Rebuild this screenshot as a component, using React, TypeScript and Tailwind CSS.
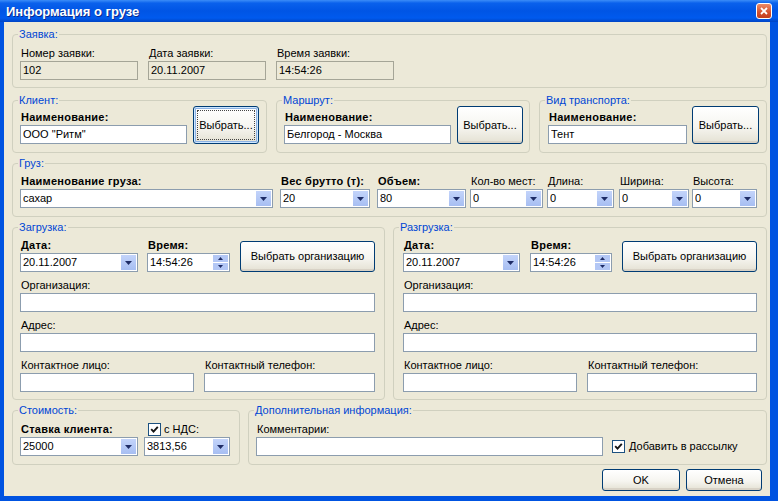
import type { ReactNode } from 'react'

function Group({
  title,
  className = '',
  children
}: {
  title: string
  className?: string
  children: ReactNode
}) {
  return (
    <div className={`relative shrink-0 rounded-[4px] border border-[#D0D0BF] ${className}`}>
      <span className="absolute -top-[7px] left-[5px] bg-[#ECE9D8] px-[1px] leading-[13px] text-[#0046D5]">
        {title}
      </span>
      {children}
    </div>
  )
}

function Label({ children, bold = false }: { children: ReactNode; bold?: boolean }) {
  return (
    <div
      className={`h-[14px] whitespace-nowrap pl-[1px] leading-[14px] ${
        bold ? 'font-bold tracking-[0.25px]' : ''
      }`}
    >
      {children}
    </div>
  )
}

function ArrowDown() {
  return (
    <svg width="7" height="4" viewBox="0 0 7 4">
      <path d="M0 0h7L3.5 4z" fill="#1E2C66" />
    </svg>
  )
}

function ArrowUp() {
  return (
    <svg width="5" height="3" viewBox="0 0 5 3">
      <path d="M0 3h5L2.5 0z" fill="#1E2C66" />
    </svg>
  )
}

function DropBtn() {
  return (
    <span className="mr-[1px] flex h-[15px] w-[15px] shrink-0 items-center justify-center bg-[linear-gradient(180deg,#C3D4FA_0%,#A7BEF2_100%)]">
      <ArrowDown />
    </span>
  )
}

function Spin() {
  return (
    <span className="mr-[1px] flex shrink-0 flex-col gap-[1px]">
      <span className="flex h-[7px] w-[15px] items-center justify-center bg-[#B3C7F5]">
        <ArrowUp />
      </span>
      <span className="flex h-[7px] w-[15px] items-center justify-center bg-[#B3C7F5]">
        <svg width="5" height="3" viewBox="0 0 5 3">
          <path d="M0 0h5L2.5 3z" fill="#1E2C66" />
        </svg>
      </span>
    </span>
  )
}

function Box({
  value = '',
  disabled = false,
  kind = 'text'
}: {
  value?: string
  disabled?: boolean
  kind?: 'text' | 'combo' | 'spin'
}) {
  return (
    <div
      className={`mt-[1px] flex h-[19px] items-center whitespace-nowrap border pl-[2px] ${
        disabled ? 'border-[#A5A597] bg-[#ECE9D8]' : 'border-[#8C9DAE] bg-white'
      }`}
    >
      <span className="flex-1 overflow-hidden">{value}</span>
      {kind === 'combo' && <DropBtn />}
      {kind === 'spin' && <Spin />}
    </div>
  )
}

function Field({
  label,
  value,
  bold,
  disabled,
  kind,
  className = ''
}: {
  label: string
  value?: string
  bold?: boolean
  disabled?: boolean
  kind?: 'text' | 'combo' | 'spin'
  className?: string
}) {
  return (
    <div className={`shrink-0 ${className}`}>
      <Label bold={bold}>{label}</Label>
      <Box value={value} disabled={disabled} kind={kind} />
    </div>
  )
}

function XPButton({
  children,
  focused = false,
  className = ''
}: {
  children: ReactNode
  focused?: boolean
  className?: string
}) {
  return (
    <button
      type="button"
      className={`relative flex shrink-0 items-center justify-center rounded-[3px] border border-[#003C74] bg-[linear-gradient(180deg,#FFFFFF_0%,#F6F5F0_55%,#E4E1D3_100%)] text-[11px] font-normal text-black ${
        focused
          ? 'shadow-[inset_0_0_0_1px_#CEE7FF,inset_0_0_0_2px_#8DB2E3]'
          : 'shadow-[inset_0_-2px_0_#D8D2C6]'
      } ${className}`}
    >
      {focused && <span className="absolute inset-[3px] border border-dotted border-[#444]" />}
      {children}
    </button>
  )
}

function CheckBox() {
  return (
    <span className="flex h-[13px] w-[13px] shrink-0 items-center justify-center border border-[#1C5180] bg-white">
      <svg width="9" height="9" viewBox="0 0 9 9">
        <path d="M1.2 4.2 3.5 6.6 7.8 1.8" fill="none" stroke="#141414" strokeWidth="1.9" />
      </svg>
    </span>
  )
}

export default function App() {
  return (
    <div className="flex h-[501px] w-[778px] flex-col bg-[#0053E1] font-['Liberation_Sans',Arial,sans-serif] text-[11px] text-black">
      {/* title bar */}
      <div className="flex h-[22px] shrink-0 items-center bg-[linear-gradient(180deg,#3C8DF8_0%,#0A61EC_14%,#0055E5_50%,#005AEE_82%,#0044C4_100%)] pl-[6px] pr-[5px]">
        <span className="flex-1 pt-[2px] text-[13px] font-bold text-white [text-shadow:1px_1px_0_#0B2B8F]">
          Информация о грузе
        </span>
        <span className="mr-[1px] flex h-[16px] w-[16px] items-center justify-center rounded-[3px] border border-white bg-[linear-gradient(180deg,#EC8B68_0%,#D4502E_60%,#C23E1E_100%)]">
          <svg width="8" height="8" viewBox="0 0 8 8">
            <path d="M1 1l6 6M7 1l-6 6" stroke="#fff" strokeWidth="1.8" />
          </svg>
        </span>
      </div>

      {/* client area */}
      <div className="mb-[5px] ml-[4px] mr-[8px] flex flex-1 flex-col bg-[#ECE9D8] pl-[8px] pt-[12px]">
        <Group title="Заявка:" className="w-[755px] pb-[7px] pl-[7px] pt-[11px]">
          <div className="flex gap-[10px]">
            <Field label="Номер заявки:" value="102" disabled className="w-[118px]" />
            <Field label="Дата заявки:" value="20.11.2007" disabled className="w-[118px]" />
            <Field label="Время заявки:" value="14:54:26" disabled className="w-[118px]" />
          </div>
        </Group>

        <div className="mt-[12px] flex gap-[9px]">
          <Group title="Клиент:" className="w-[255px] pb-[8px] pl-[7px] pt-[5px]">
            <div className="flex items-end gap-[6px]">
              <Field label="Наименование:" value={'ООО "Ритм"'} bold className="w-[167px]" />
              <XPButton focused className="h-[38px] w-[66px]">
                Выбрать...
              </XPButton>
            </div>
          </Group>
          <Group title="Маршрут:" className="w-[254px] pb-[8px] pl-[7px] pt-[5px]">
            <div className="flex items-end gap-[6px]">
              <Field label="Наименование:" value="Белгород - Москва" bold className="w-[167px]" />
              <XPButton className="h-[38px] w-[66px]">Выбрать...</XPButton>
            </div>
          </Group>
          <Group title="Вид транспорта:" className="w-[228px] pb-[8px] pl-[8px] pt-[5px]">
            <div className="flex items-end gap-[5px]">
              <Field label="Наименование:" value="Тент" bold className="w-[139px]" />
              <XPButton className="h-[38px] w-[67px]">Выбрать...</XPButton>
            </div>
          </Group>
        </div>

        <Group title="Груз:" className="mt-[10px] w-[755px] pb-[8px] pl-[7px] pt-[10px]">
          <div className="flex">
            <Field label="Наименование груза:" value="сахар" bold kind="combo" className="w-[253px]" />
            <Field label="Вес брутто (т):" value="20" bold kind="combo" className="ml-[7px] w-[90px]" />
            <Field label="Объем:" value="80" bold kind="combo" className="ml-[7px] w-[89px]" />
            <Field label="Кол-во мест:" value="0" kind="combo" className="ml-[4px] w-[73px]" />
            <Field label="Длина:" value="0" kind="combo" className="ml-[4px] w-[67px]" />
            <Field label="Ширина:" value="0" kind="combo" className="ml-[5px] w-[70px]" />
            <Field label="Высота:" value="0" kind="combo" className="ml-[3px] w-[65px]" />
          </div>
        </Group>

        <div className="mt-[10px] flex gap-[8px]">
          <Group title="Загрузка:" className="w-[373px] pb-[7px] pl-[7px] pt-[10px]">
            <div className="flex items-end">
              <Field label="Дата:" value="20.11.2007" bold kind="combo" className="w-[118px]" />
              <Field label="Время:" value="14:54:26" bold kind="spin" className="ml-[9px] w-[83px]" />
              <XPButton className="ml-[10px] h-[31px] w-[135px]">Выбрать организацию</XPButton>
            </div>
            <Field label="Организация:" className="mt-[6px] w-[355px]" />
            <Field label="Адрес:" className="mt-[6px] w-[355px]" />
            <div className="mt-[6px] flex gap-[10px]">
              <Field label="Контактное лицо:" className="w-[174px]" />
              <Field label="Контактный телефон:" className="w-[171px]" />
            </div>
          </Group>
          <Group title="Разгрузка:" className="w-[374px] pb-[7px] pl-[9px] pt-[10px]">
            <div className="flex items-end">
              <Field label="Дата:" value="20.11.2007" bold kind="combo" className="w-[117px]" />
              <Field label="Время:" value="14:54:26" bold kind="spin" className="ml-[10px] w-[82px]" />
              <XPButton className="ml-[10px] h-[31px] w-[135px]">Выбрать организацию</XPButton>
            </div>
            <Field label="Организация:" className="mt-[6px] w-[354px]" />
            <Field label="Адрес:" className="mt-[6px] w-[354px]" />
            <div className="mt-[6px] flex gap-[10px]">
              <Field label="Контактное лицо:" className="w-[174px]" />
              <Field label="Контактный телефон:" className="w-[170px]" />
            </div>
          </Group>
        </div>

        <div className="mt-[10px] flex gap-[8px]">
          <Group title="Стоимость:" className="w-[228px] pb-[8px] pl-[7px] pt-[11px]">
            <div className="flex gap-[6px]">
              <Field label="Ставка клиента:" value="25000" bold kind="combo" className="w-[118px]" />
              <div className="w-[86px] shrink-0">
                <div className="flex h-[14px] items-center pl-[4px]">
                  <CheckBox />
                  <span className="ml-[3px] leading-[14px]">с НДС:</span>
                </div>
                <Box value="3813,56" kind="combo" />
              </div>
            </div>
          </Group>
          <Group title="Дополнительная информация:" className="w-[519px] pb-[8px] pl-[7px] pt-[11px]">
            <div className="flex items-end">
              <Field label="Комментарии:" className="w-[347px]" />
              <div className="ml-[9px] flex h-[19px] items-center">
                <CheckBox />
                <span className="ml-[4px] whitespace-nowrap">Добавить в рассылку</span>
              </div>
            </div>
          </Group>
        </div>

        <div className="mt-[4px] flex justify-end gap-[6px] pr-[8px]">
          <XPButton className="h-[22px] w-[78px]">OK</XPButton>
          <XPButton className="h-[22px] w-[76px]">Отмена</XPButton>
        </div>
      </div>
    </div>
  )
}
